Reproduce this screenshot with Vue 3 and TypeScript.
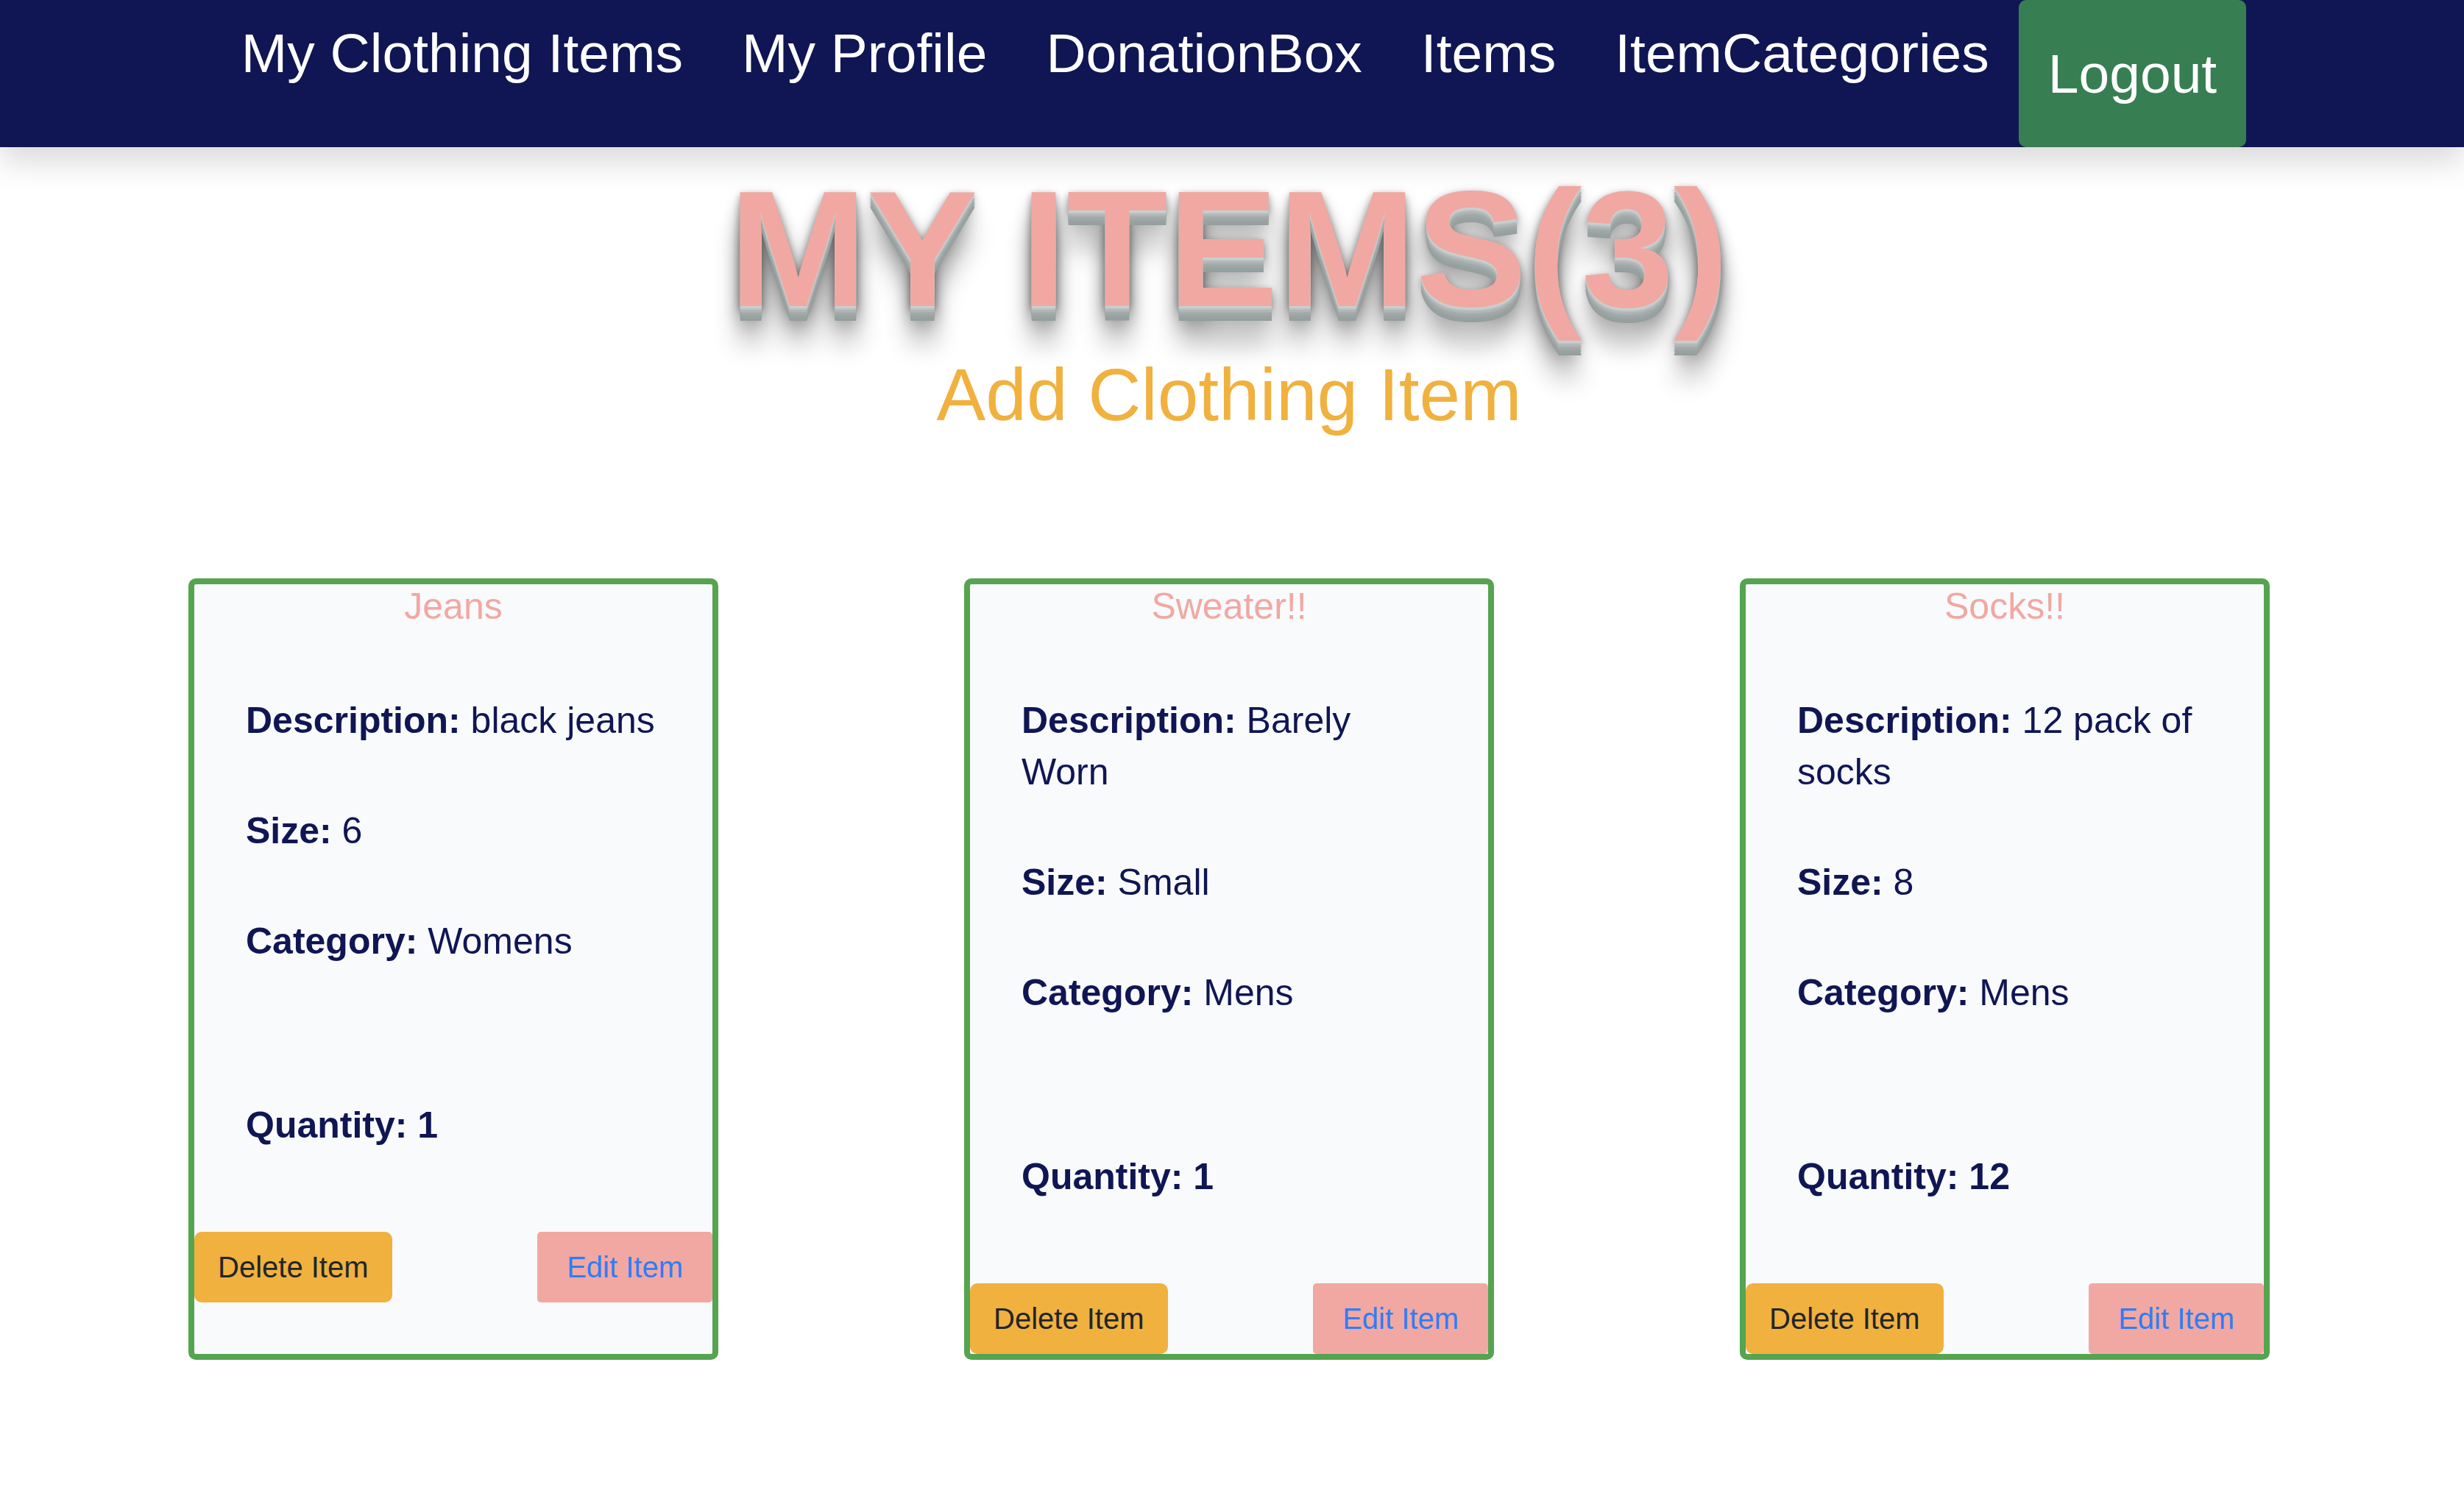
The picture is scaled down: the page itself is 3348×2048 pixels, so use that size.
<script setup lang="ts">
interface ClothingItem {
  id: number
  name: string
  description: string
  size: string
  category: string
  quantity: number
}

const links: string[] = ['My Clothing Items', 'My Profile', 'DonationBox', 'Items', 'ItemCategories']

const items: ClothingItem[] = [
  { id: 1, name: 'Jeans', description: 'black jeans', size: '6', category: 'Womens', quantity: 1 },
  { id: 2, name: 'Sweater!!', description: 'Barely Worn', size: 'Small', category: 'Mens', quantity: 1 },
  { id: 3, name: 'Socks!!', description: '12 pack of socks', size: '8', category: 'Mens', quantity: 12 },
]
</script>

<template>
  <div class="page">
    <nav class="navbar">
      <a v-for="link in links" :key="link" class="nav-link" href="#">{{ link }}</a>
      <button class="logout" type="button">Logout</button>
    </nav>

    <main class="content">
      <h1 class="title">MY ITEMS({{ items.length }})</h1>
      <a class="add-link" href="#">Add Clothing Item</a>

      <section class="cards">
        <article v-for="item in items" :key="item.id" class="card">
          <h2 class="card-title">{{ item.name }}</h2>
          <div class="card-body">
            <p><strong>Description:</strong> {{ item.description }}</p>
            <p><strong>Size:</strong> {{ item.size }}</p>
            <p><strong>Category:</strong> {{ item.category }}</p>
            <p class="quantity"><strong>Quantity: {{ item.quantity }}</strong></p>
          </div>
          <div class="card-actions">
            <button class="delete" type="button">Delete Item</button>
            <a class="edit" href="#">Edit Item</a>
          </div>
        </article>
      </section>
    </main>
  </div>
</template>

<style>
body {
  margin: 0;
  background: #fff;
}
</style>

<style scoped>
.page {
  font-family: "Liberation Sans", Arial, Helvetica, sans-serif;
  font-size: 50px;
  line-height: 70px;
  color: #101653;
}

.page * {
  box-sizing: border-box;
}

a {
  text-decoration: none;
}

.navbar {
  position: relative;
  z-index: 1;
  display: flex;
  justify-content: center;
  height: 200px;
  padding-right: 8px;
  background: #101653;
  box-shadow: 0 20px 40px rgba(0, 0, 0, 0.15);
}

.nav-link,
.logout {
  padding: 16px 40px;
  font-size: 75px;
  line-height: 112px;
  color: #fff;
  white-space: nowrap;
}

.logout {
  border: 0;
  border-radius: 10px;
  background: #377e53;
  font-family: inherit;
}

.content {
  display: flex;
  flex-direction: column;
  align-items: center;
  padding: 0 97px 40px 89px;
}

.title {
  margin: 0;
  font-size: 225px;
  line-height: 276px;
  font-weight: 700;
  color: #f1a8a2;
  text-shadow:
    0 3px 0 hsl(174, 5%, 80%),
    0 5px 0 hsl(174, 5%, 75%),
    0 8px 0 hsl(174, 5%, 70%),
    0 10px 0 hsl(174, 5%, 66%),
    0 13px 0 hsl(174, 5%, 64%),
    0 15px 0 hsl(174, 5%, 62%),
    0 18px 0 hsl(174, 5%, 61%),
    0 20px 0 hsl(174, 5%, 60%),
    0 0 13px rgba(0, 0, 0, 0.05),
    0 3px 8px rgba(0, 0, 0, 0.2),
    0 8px 13px rgba(0, 0, 0, 0.2),
    0 13px 25px rgba(0, 0, 0, 0.2),
    0 25px 25px rgba(0, 0, 0, 0.2),
    0 50px 35px rgba(0, 0, 0, 0.3);
}

.add-link {
  position: relative;
  font-size: 100px;
  line-height: 120px;
  color: #f0b13f;
}

.cards {
  display: grid;
  grid-template-columns: repeat(3, 1fr);
  justify-items: center;
  width: 100%;
  margin-top: 190px;
}

.card {
  width: 720px;
  border: 8px solid #55a450;
  border-radius: 10px;
  background: #f8fafc;
}

.card-title {
  margin: 0 0 90px;
  font-size: 50px;
  line-height: 60px;
  font-weight: 400;
  text-align: center;
  color: #f1a8a2;
}

.card-body {
  padding: 0 70px;
}

.card-body p {
  margin: 0 0 80px;
}

.card-body .quantity {
  margin: 180px 0 110px;
}

.card-actions {
  display: flex;
  justify-content: space-between;
}

.delete,
.edit {
  padding: 18px 40px;
  font-size: 40px;
  line-height: 60px;
}

.delete {
  padding: 18px 32px;
  border: 0;
  border-radius: 10px;
  background: #f0b13f;
  color: #212529;
  font-family: inherit;
}

.edit {
  border-radius: 5px;
  background: #f1a8a2;
  color: #2f7df6;
}
</style>
